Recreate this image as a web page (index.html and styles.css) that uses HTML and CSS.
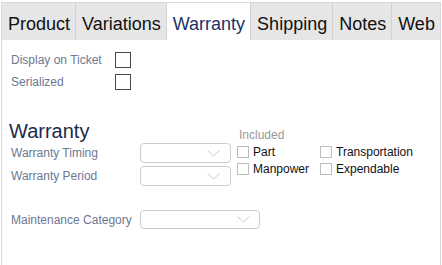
FILE: index.html
```html
<!DOCTYPE html>
<html>
<head>
<meta charset="utf-8">
<link rel="stylesheet" href="styles.css">
</head>
<body>
<div class="frame">
  <div class="tabs">
    <div class="tab">Product</div>
    <div class="tab">Variations</div>
    <div class="tab active">Warranty</div>
    <div class="tab">Shipping</div>
    <div class="tab">Notes</div>
    <div class="tab last">Web</div>
  </div>
  <div class="content">
    <div class="row">
      <span class="lbl short">Display on Ticket</span>
      <span class="box"></span>
    </div>
    <div class="row">
      <span class="lbl short">Serialized</span>
      <span class="box"></span>
    </div>
    <div class="section">
      <div class="left">
        <div class="heading">Warranty</div>
        <div class="frow first">
          <span class="lbl wide">Warranty Timing</span>
          <span class="select">
            <svg width="13" height="7" viewBox="0 0 13 7"><polyline points="0.5,0.5 6.5,6 12.5,0.5" fill="none" stroke="#c9c9c9" stroke-width="1"/></svg>
          </span>
        </div>
        <div class="frow">
          <span class="lbl wide">Warranty Period</span>
          <span class="select">
            <svg width="13" height="7" viewBox="0 0 13 7"><polyline points="0.5,0.5 6.5,6 12.5,0.5" fill="none" stroke="#c9c9c9" stroke-width="1"/></svg>
          </span>
        </div>
      </div>
      <div class="included">
        <div class="inc-title">Included</div>
        <div class="inc-grid">
          <div class="inc"><span class="sbox"></span>Part</div>
          <div class="inc"><span class="sbox"></span>Transportation</div>
          <div class="inc"><span class="sbox"></span>Manpower</div>
          <div class="inc"><span class="sbox"></span>Expendable</div>
        </div>
      </div>
    </div>
    <div class="frow maint">
      <span class="lbl wide">Maintenance Category</span>
      <span class="select long">
        <svg width="13" height="7" viewBox="0 0 13 7"><polyline points="0.5,0.5 6.5,6 12.5,0.5" fill="none" stroke="#c9c9c9" stroke-width="1"/></svg>
      </span>
    </div>
  </div>
</div>
</body>
</html>
```
FILE: styles.css
```css
html, body {
  margin: 0;
  padding: 0;
  background: #ffffff;
}
body {
  font-family: "Liberation Sans", Arial, sans-serif;
}
.frame {
  margin: 2px 0 0 1px;
  width: 440px;
  height: 263px;
  border: 1px solid #d9d9d9;
  border-bottom: none;
  box-sizing: border-box;
}
.tabs {
  display: flex;
  height: 37px;
  background: #e6e6e6;
}
.tab {
  font-size: 18px;
  color: #111111;
  padding: 6px 5px 0 6px;
  line-height: 31px;
  border-right: 1px solid #d2d2d2;
  white-space: nowrap;
}
.tab.active {
  background: #ffffff;
  color: #1b3466;
}
.tab.last {
  border-right: none;
}
.content {
  padding: 12px 0 0 9px;
}
.row {
  display: flex;
  align-items: center;
  height: 16px;
  margin-bottom: 6px;
}
.lbl {
  font-size: 12px;
  color: #6c7893;
  white-space: nowrap;
}
.lbl.short {
  width: 104px;
}
.lbl.wide {
  width: 129px;
}
.box {
  width: 16px;
  height: 16px;
  box-sizing: border-box;
  border: 1.5px solid #4a4a4a;
}
.section {
  display: flex;
  margin-top: 30px;
}
.left {
  display: flex;
  flex-direction: column;
}
.heading {
  font-size: 20px;
  line-height: 22px;
  color: #1b2b4b;
  margin-left: -2px;
}
.frow {
  display: flex;
  align-items: center;
  margin-top: 3px;
}
.frow.first {
  margin-top: 1px;
}
.select {
  width: 91px;
  height: 20px;
  box-sizing: border-box;
  border: 1px solid #cccccc;
  border-radius: 4px;
  display: flex;
  align-items: center;
  justify-content: flex-end;
  padding-right: 10px;
}
.select.long {
  width: 120px;
  height: 19px;
  padding-right: 9px;
}
.included {
  margin-left: 6px;
  margin-top: 8px;
}
.inc-title {
  font-size: 12px;
  line-height: 14px;
  color: #999999;
  margin-left: 2px;
}
.inc-grid {
  display: grid;
  grid-template-columns: 83px auto;
  row-gap: 3px;
  margin-top: 3px;
}
.inc {
  display: flex;
  align-items: center;
  height: 14px;
  font-size: 12px;
  color: #111111;
  white-space: nowrap;
}
.sbox {
  width: 12px;
  height: 12px;
  box-sizing: border-box;
  border: 1px solid #bdbdbd;
  margin-right: 4px;
}
.maint {
  margin-top: 24px;
}
```
